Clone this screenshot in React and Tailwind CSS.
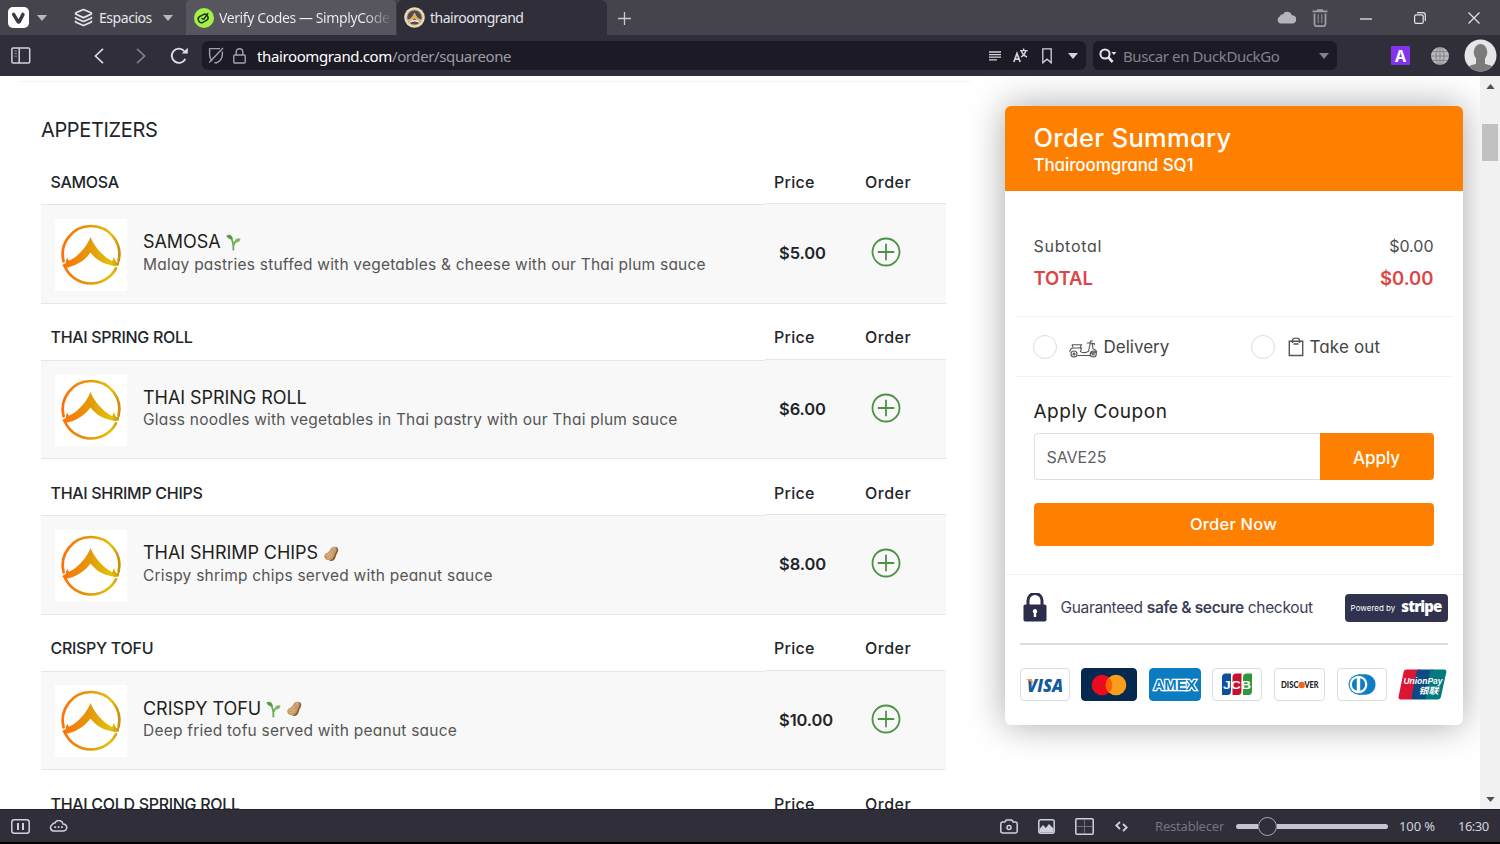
import React from "react";
import { Layers } from "lucide-react";

const menu = [
  {
    name: "SAMOSA",
    desc: "Malay pastries stuffed with vegetables & cheese with our Thai plum sauce",
    price: "$5.00",
    tags: ["veg"],
  },
  {
    name: "THAI SPRING ROLL",
    desc: "Glass noodles with vegetables in Thai pastry with our Thai plum sauce",
    price: "$6.00",
    tags: [],
  },
  {
    name: "THAI SHRIMP CHIPS",
    desc: "Crispy shrimp chips served with peanut sauce",
    price: "$8.00",
    tags: ["nut"],
  },
  {
    name: "CRISPY TOFU",
    desc: "Deep fried tofu served with peanut sauce",
    price: "$10.00",
    tags: ["veg", "nut"],
  },
];

const Caret = ({ className = "" }) => (
  <svg width="10" height="6" viewBox="0 0 10 6" className={className}>
    <path d="M0 0h10L5 6z" fill="currentColor" />
  </svg>
);

const RoofLogo = () => (
  <svg width="72" height="72" viewBox="0 0 72 72" className="mt-[2px] bg-white">
    <defs>
      <linearGradient id="roof" x1="6" y1="0" x2="65" y2="0" gradientUnits="userSpaceOnUse">
        <stop offset="0" stopColor="#ff6f0a" />
        <stop offset="0.5" stopColor="#e39a08" />
        <stop offset="0.85" stopColor="#e3c20a" />
        <stop offset="1" stopColor="#c98a10" />
      </linearGradient>
    </defs>
    <g stroke="url(#roof)" fill="none" strokeWidth="2.7" strokeLinecap="round">
      <path d="M8.6 42.3A28.3 28.3 0 1 1 63.6 41.6" />
      <path d="M10.2 48.2A28.3 28.3 0 0 0 60.9 49.3" />
    </g>
    <path
      d="M35.5 18C31.5 28 23.500 37 14.500 41.600C12.900 41 12.600 40 12.600 38.400C10.700 40.400 11 42.600 10.800 44L7.200 46L9.500 49.200C20 47.500 29.500 42 35.500 33.600C41.500 41.500 50 45.800 60 46.900L63.800 46.500L64.300 42L61.500 43.300C60.400 42 59.600 40.300 59 38C58 39.800 58.200 41 57 41.900C48 37.500 39.500 28 35.500 18Z"
      fill="url(#roof)"
    />
  </svg>
);

const Sprout = () => (
  <svg width="15" height="17" viewBox="0 0 15 17" className="relative top-px">
    <path d="M7.3 16.4C7.7 12 7.4 8.5 5.4 4.6M7.8 10.6C8.4 8.8 9.4 7.6 10.8 6.8" stroke="#6aab55" strokeWidth="1.8" fill="none" />
    <path d="M.4 1.8C3-.2 6.600 1 6.800 5.400C3.600 5.600 1.600 4.600.4 1.800Z" fill="#5b9b4c" />
    <path d="M14.6 4.8C11.8 3.4 8.8 5 8.6 8.2C11.6 9 13.8 8 14.6 4.8Z" fill="#7cba60" />
  </svg>
);

const Peanut = () => (
  <svg width="16" height="16" viewBox="0 0 16 16" className="relative top-px">
    <path d="M12 .8C14.800 1 15.800 3.200 15 5.400C14.200 7.200 13.200 8.400 12.800 10.400C12.300 13.400 10 15.600 7.500 15C5.600 14.200 6.400 12 7.200 10Z" fill="#8d5b31" />
    <path d="M7.800 2.600C9 .5 12 .2 13.200 1.900C14.400 3.900 13 5.600 12 7.400C11 9.400 11.200 11 9.200 13C7 15 3 14.600 1.600 12C.4 9.400 2 7.600 4.200 6.700C6.400 5.700 6.800 4.400 7.800 2.600Z" fill="#c99c6b" />
    <path d="M3.200 9.600C5.600 8.600 7.200 7.400 8.400 5.200M4.400 12C6.600 11.600 7.800 10 8.800 8M10 3.200L11.400 2.400" stroke="#e6c597" strokeWidth=".9" fill="none" />
  </svg>
);

const AddButton = () => (
  <button className="mb-[2px] text-[#4c9245]" aria-label="Add">
    <svg width="30" height="30" viewBox="0 0 30 30" fill="none" stroke="currentColor">
      <circle cx="15" cy="15" r="13.5" strokeWidth="1.8" />
      <path d="M15 6.8v16.4M6.8 15h16.4" strokeWidth="1.8" />
    </svg>
  </button>
);

const TabBar = () => (
  <div className="flex h-[35px] shrink-0 bg-[#45444c] text-[14px] text-[#e4e4ea]">
    <div className="flex w-[186px] items-center pl-2">
      <svg width="21" height="21" viewBox="0 0 21 21">
        <rect width="21" height="21" rx="5" fill="#fff" />
        <path d="M5.6 7.4L10 14.6C10.4 15.3 10.9 15.3 11.3 14.6L15 7.4" stroke="#3b3a42" strokeWidth="3.4" strokeLinecap="round" fill="none" />
      </svg>
      <Caret className="ml-2 text-[#b9b8c0]" />
      <Layers size={19} strokeWidth={2.2} className="ml-[27px]" />
      <span className="ml-[6px] w-[54px] tracking-[-0.45px]">Espacios</span>
      <Caret className="ml-[10px] text-[#b9b8c0]" />
    </div>
    <div className="flex w-[211px] items-center overflow-hidden rounded-t-sm border-r border-[#3a3942] bg-[#57565e] pl-2">
      <svg width="20" height="20" viewBox="0 0 20 20" className="shrink-0">
        <circle cx="10" cy="10" r="10" fill="#a4f046" />
        <g transform="rotate(-28 10 10)" fill="none" stroke="#23351c" strokeWidth="1.5">
          <rect x="4" y="6.7" width="10" height="6.6" rx="3" />
          <path d="M7.500 9.200L9.300 11L16 7.600" />
        </g>
      </svg>
      <span className="ml-[5px] w-[171px] overflow-hidden whitespace-nowrap bg-linear-to-r from-[#f0f0f4] from-85% to-[#64636b] bg-clip-text tracking-[-0.4px] text-transparent">
        Verify Codes — SimplyCode
      </span>
    </div>
    <div className="flex w-[210px] items-center rounded-t-md bg-[#302f39] pl-[7px]">
      <svg width="21" height="21" viewBox="0 0 21 21">
        <circle cx="10.5" cy="10.5" r="10.3" fill="#e9dcc4" />
        <circle cx="10.5" cy="10.5" r="7.6" fill="#4a4f58" stroke="#dfa04a" strokeWidth="1" />
        <path d="M3.5 13.4C7 12.3 9.4 9.4 10.5 6.2C11.6 9.4 14 12.3 17.5 13.4C14.4 13.9 12 12.8 10.5 10.8C9 12.8 6.6 13.9 3.5 13.4Z" fill="#f5a623" stroke="#f8ecd4" strokeWidth=".6" />
        <path d="M5 15.5C8 13 13 13 16 15.5" stroke="#efe3cf" strokeWidth="1.6" fill="none" />
      </svg>
      <span className="ml-[5px] tracking-[-0.5px]">thairoomgrand</span>
    </div>
    <div className="flex flex-1 items-center pl-[11px]">
      <svg width="13" height="13" viewBox="0 0 13 13" stroke="#c9c8d0" strokeWidth="1.3" className="mt-0.5">
        <path d="M6.5 0v13M0 6.5h13" />
      </svg>
      <div className="ml-auto flex items-center">
        <svg width="19" height="13" viewBox="0 0 19 13" fill="#b5b4bc" className="mr-px">
          <path d="M4 12.6A3.8 3.8 0 0 1 2.8 5.4A3.2 3.2 0 0 1 6 3.2A5 5 0 0 1 15 4.2A4.2 4.2 0 0 1 15.2 12.6Z" />
        </svg>
        <svg width="16" height="18" viewBox="0 0 16 18" fill="none" stroke="#a09fa7" strokeWidth="1.7" className="ml-[15px]">
          <path d="M.5 2.4h15M5 1.2h6M2.5 4.5v10.2c0 1.6.8 2.4 2.2 2.4h6.6c1.4 0 2.2-.8 2.2-2.4V4.5" />
          <path d="M6.3 5v9M9.7 5v9" strokeWidth="1.4" stroke="#7c7b83" />
        </svg>
        <svg width="12" height="12" viewBox="0 0 12 12" stroke="#e4e4ea" strokeWidth="1.3" className="ml-8">
          <path d="M0 7h12" />
        </svg>
        <svg width="12" height="12" viewBox="0 0 12 12" fill="none" stroke="#e4e4ea" strokeWidth="1.2" className="ml-[42px]">
          <rect x=".6" y="2.8" width="8.6" height="8.6" rx="1.5" />
          <path d="M3 .7h6c1.4 0 2.3.9 2.3 2.3v6" />
        </svg>
        <svg width="12" height="12" viewBox="0 0 12 12" stroke="#e4e4ea" strokeWidth="1.2" className="ml-[42px] mr-5">
          <path d="M.5.5l11 11M11.5.5l-11 11" />
        </svg>
      </div>
    </div>
  </div>
);

const AddressBar = () => (
  <div className="flex h-[41px] shrink-0 items-center bg-[#302f39] text-[15px] text-[#dddde6]">
    <svg width="20" height="17" viewBox="0 0 20 17" fill="none" stroke="#cfd1e0" strokeWidth="1.5" className="ml-[11px]">
      <rect x=".9" y=".9" width="17.8" height="15" rx="1.2" />
      <path d="M8.2 1v15" />
      <path d="M3.5 4h2.4M3.5 6.6h2.4M3.5 9.2h2.4" strokeWidth="1" stroke="#8f90a0" />
    </svg>
    <svg width="10" height="16" viewBox="0 0 10 16" fill="none" stroke="#dddde6" strokeWidth="1.6" className="ml-[63px]">
      <path d="M9 .8L1.4 8L9 15.2" />
    </svg>
    <svg width="10" height="16" viewBox="0 0 10 16" fill="none" stroke="#85848e" strokeWidth="1.6" className="ml-8">
      <path d="M1 .8L8.6 8L1 15.2" />
    </svg>
    <svg width="18" height="17" viewBox="0 0 18 17" fill="none" stroke="#dddde6" strokeWidth="1.9" className="ml-[24px]">
      <path d="M15.3 11.8A7.1 7.1 0 1 1 14.2 4" />
      <path d="M17.8.8V6.6H11.8Z" fill="#dddde6" stroke="none" />
    </svg>
    <div className="ml-[14px] flex h-[29px] w-[884px] items-center rounded-md bg-[#1c1b25] pl-[6px]">
      <svg width="16" height="17" viewBox="0 0 16 17" fill="none" stroke="#a2a2ae" strokeWidth="1.4">
        <path d="M12 1.6H1.6V7.5C1.6 10.3 2.4 12.4 4 14M6.5 15.2C7 15.6 7.6 15.8 8.1 16C12.6 14.2 14.4 11.2 14.4 7V4.6" />
        <path d="M15 1L1.2 15.4" />
      </svg>
      <svg width="13" height="16" viewBox="0 0 13 16" fill="none" stroke="#a2a2ae" strokeWidth="1.4" className="ml-[9px]">
        <rect x=".8" y="7" width="11.4" height="8" rx="1" />
        <path d="M3.2 7V4A3.3 3.3 0 0 1 9.8 4V7" />
      </svg>
      <span className="ml-[11px] mt-px tracking-[-0.38px] text-[#9d9ca8]">
        <span className="text-white">thairoomgrand.com</span>/order/squareone
      </span>
      <div className="ml-auto flex items-center text-[#d3d3dc]">
        <svg width="12" height="10" viewBox="0 0 12 10" stroke="currentColor" strokeWidth="1.3">
          <path d="M0 1h12M0 3.6h12M0 6.2h12M0 8.8h8" />
        </svg>
        <svg width="15" height="15" viewBox="0 0 15 15" fill="none" stroke="currentColor" strokeWidth="1.4" className="ml-3">
          <path d="M.8 14L4 5.4L7.2 14M1.9 11.2h4.2" strokeWidth="1.7" />
          <path d="M7 2.6h7.6M10.6.4v2.2M8 9C10.6 7.6 12.2 5.6 12.8 2.8M8.4 3C9.2 5.6 11 7.8 14 9" />
        </svg>
        <svg width="10" height="16" viewBox="0 0 10 16" fill="none" stroke="currentColor" strokeWidth="1.3" className="ml-[14px]">
          <path d="M.8.8h8.4v14L5 11.2L.8 14.8Z" />
        </svg>
        <Caret className="ml-4 mr-[8px]" />
      </div>
    </div>
    <div className="ml-[7px] flex h-[29px] w-[244px] items-center rounded-md bg-[#1c1b25] pl-[6px] text-[#82818d]">
      <svg width="18" height="15" viewBox="0 0 18 15" fill="none" stroke="#e2e2ea" strokeWidth="2">
        <circle cx="6" cy="6" r="4.6" />
        <path d="M9.4 9.4L13.6 14" strokeWidth="2.6" />
        <path d="M12.4 4h5L14.9 7Z" fill="#e2e2ea" stroke="none" />
      </svg>
      <span className="ml-[6px] mt-px tracking-[-0.4px]">Buscar en DuckDuckGo</span>
      <Caret className="ml-auto mr-2" />
    </div>
    <div className="ml-[54px] flex h-[19px] w-[19px] items-center justify-center rounded-[1px] bg-[#8332ee] text-[16px] font-bold text-white">
      A
    </div>
    <svg width="18" height="18" viewBox="0 0 18 18" className="ml-[21px]">
      <circle cx="9" cy="9" r="9" fill="#b9b9bd" />
      <g fill="none" stroke="#77777c" strokeWidth=".8">
        <ellipse cx="9" cy="9" rx="4" ry="8.8" />
        <path d="M9 0v18M0 9h18M1.6 4.6h14.8M1.6 13.4h14.8" />
      </g>
    </svg>
    <svg width="33" height="33" viewBox="0 0 33 33" className="ml-[15px]">
      <clipPath id="avatar">
        <circle cx="16.5" cy="16.5" r="16" />
      </clipPath>
      <circle cx="16.5" cy="16.5" r="16" fill="#e6e6e6" />
      <g clipPath="url(#avatar)" fill="#7b7b7b">
        <ellipse cx="16.5" cy="13.2" rx="6.8" ry="8.2" />
        <path d="M12 18h9v7c3 .8 7 1.200 9 4l-3 5H6l-3-5c2-2.800 6-3.200 9-4Z" />
      </g>
    </svg>
  </div>
);

const SectionHeader = ({ name }) => (
  <div className="flex h-14 shrink-0 items-center pt-[11px] text-[16px] font-[450] text-[#212529]">
    <div className="w-[724px] pl-[9.5px] tracking-[-0.3px]">{name}</div>
    <div className="w-[90px] pl-[9px] tracking-[0.3px]">Price</div>
    <div className="pl-[10px] tracking-[0.5px]">Order</div>
  </div>
);

const MenuSection = ({ item }) => (
  <section className="h-[155.5px] shrink-0">
    <SectionHeader name={item.name} />
    <div className="flex h-[99.5px]">
      <div className="flex w-[724px] items-center border-y border-[#e6e6e6] bg-[#f8f8f8] pl-[14px]">
        <RoofLogo />
        <div className="ml-4 pb-[1px]">
          <div className="flex h-6 items-center gap-[5px]">
            <h3 className="text-[18px] font-[420] tracking-[-0.05px] text-[#1d1f21]">{item.name}</h3>
            {item.tags.map((tag) => (tag === "veg" ? <Sprout key={tag} /> : <Peanut key={tag} />))}
          </div>
          <p className="h-[23px] whitespace-nowrap text-[15.5px] leading-[22px] tracking-[0.22px] text-[#555]">{item.desc}</p>
        </div>
      </div>
      <div className="-mt-px flex w-[181px] items-center border-y border-[#e6e6e6] bg-[#f8f8f8] pl-[14px]">
        <span className="w-[92px] pt-px text-[16.5px] font-semibold tracking-[-0.1px] text-[#212529]">{item.price}</span>
        <AddButton />
      </div>
    </div>
  </section>
);

const Scooter = () => (
  <svg width="28" height="18" viewBox="0 0 28 18" fill="none" stroke="#555" strokeWidth="1.1">
    <circle cx="5" cy="14" r="3" />
    <circle cx="24.3" cy="14" r="3" />
    <circle cx="5" cy="14" r="1" />
    <circle cx="24.3" cy="14" r="1" />
    <path d="M.8 12.300C.8 9.500 2.500 8 5 8h7.500l-1 3.600c1.200 1 3.300 1.200 5.500.8l2.600-1.200L21.300 3h1.500l1.400 6c2 .3 3.300 1.500 3.500 3.500l-4.700-.5-2.300 3.500H8.500" />
    <path d="M3 4.700h9.500L11 8M3 4.700L4 7.500M17.800 3h3l1.200-2.200h1.600M22.800 3.600h2.400v1.600" />
  </svg>
);

const Bag = () => (
  <svg width="16" height="20" viewBox="0 0 16 20" fill="none" stroke="#555" strokeWidth="1.4">
    <path d="M1.3 4.2h13.400v14.300H1.3ZM4.500 6V3.200C4.500.4 11.500.4 11.500 3.200V6M5.500 7h5" />
  </svg>
);

const CardBox = ({ className = "border-[#dcdce2] bg-white w-[50px]", children }) => (
  <div className={`flex h-[33px] items-center justify-center rounded-[4px] border ${className}`}>
    {children}
  </div>
);

const Cards = () => (
  <div className="mt-[23px] flex items-center justify-between">
    <CardBox>
      <svg width="40" height="18" viewBox="0 0 40 18">
        <text x="2" y="15.5" textLength="36" lengthAdjust="spacingAndGlyphs" fontFamily="Open Sans, sans-serif" fontSize="17" fontWeight="800" fontStyle="italic" fill="#165a9e">VISA</text>
        <path d="M.3 3H5.600C6.800 3 7.100 3.600 7.400 4.600L8.200 8C6.500 5.600 3.800 3.800.3 3Z" fill="#f3a01e" />
      </svg>
    </CardBox>
    <CardBox className="w-[56px] border-[#06294f] bg-[#06294f]">
      <svg width="36" height="22" viewBox="0 0 36 22">
        <circle cx="11" cy="11" r="10.3" fill="#eb0a1e" />
        <circle cx="25" cy="11" r="10.3" fill="#f79e1b" />
        <path d="M18 3.400A10.300 10.300 0 0 1 18 18.600A10.300 10.300 0 0 1 18 3.400Z" fill="#ff5f00" />
      </svg>
    </CardBox>
    <CardBox className="w-[52px] border-[#0b7bc2] bg-[#0b7bc2]">
      <svg width="48" height="18" viewBox="0 0 48 18">
        <text x="2.5" y="14" textLength="43" lengthAdjust="spacingAndGlyphs" fontFamily="Liberation Sans, sans-serif" fontSize="14" fontWeight="700" fill="#0b7bc2" stroke="#fff" strokeWidth="2.4" paintOrder="stroke">AMEX</text>
      </svg>
    </CardBox>
    <CardBox>
      <svg width="30" height="23" viewBox="0 0 30 23">
        <path d="M0 22V4C0 1.600 1.600.4 3.600.4H9V18C9 21 7.500 22 5.500 22Z" fill="#0f4fa0" />
        <path d="M10.500 22V4C10.500 1.600 12 .4 14 .4H19.500V18C19.500 21 18 22 16 22Z" fill="#c8102e" />
        <path d="M21 22V4C21 1.600 22.500.4 24.500.4H30V18C30 21 28.500 22 26.500 22Z" fill="#2c9a3c" />
        <text x="1" y="15.5" textLength="28" lengthAdjust="spacingAndGlyphs" fontFamily="Liberation Sans, sans-serif" fontSize="11" fontWeight="700" fill="#fff">JCB</text>
      </svg>
    </CardBox>
    <CardBox className="w-[51px] border-[#dcdce2] bg-white">
      <svg width="38" height="10" viewBox="0 0 38 10" fontFamily="Lato, sans-serif" fontSize="8.5" fontWeight="900" fill="#222">
        <text x="0" y="8" textLength="17.5" lengthAdjust="spacingAndGlyphs">DISC</text>
        <circle cx="20.7" cy="5" r="3.2" fill="#f2641f" />
        <text x="23.5" y="8" textLength="14" lengthAdjust="spacingAndGlyphs">VER</text>
      </svg>
    </CardBox>
    <CardBox>
      <svg width="28" height="21" viewBox="0 0 28 21">
        <path d="M10 .3H17C23 .3 27.500 4.600 27.500 10.500S23 20.700 17 20.700H10Z" fill="#0f7cc4" />
        <circle cx="10.5" cy="10.5" r="10" fill="#1b84c8" />
        <circle cx="10.5" cy="10.5" r="8.8" fill="#fff" />
        <path d="M8.800 4.300V16.700A6.400 6.400 0 0 1 8.800 4.300ZM12.200 4.300V16.700A6.400 6.400 0 0 0 12.200 4.300Z" fill="#0f7cc4" />
      </svg>
    </CardBox>
    <svg width="49" height="31" viewBox="0 0 49 31">
      <path d="M8.500.5H22L15 30.500H3C1 30.500.2 29.300.6 27.500L5.600 3C6 1.300 7 .5 8.500.5Z" fill="#dc1535" />
      <path d="M21 .5H35L28 30.500H16C14 30.500 13.300 29.300 13.700 27.500L18.500 3C19 1.300 19.700.5 21 .5Z" fill="#0b4a82" />
      <path d="M34 .5H46C48 .5 48.700 1.600 48.300 3.300L43 27.500C42.600 29.500 41.500 30.500 39.700 30.500H27.500L32 3C32.300 1.300 32.700.5 34 .5Z" fill="#037a80" />
      <text x="5.5" y="15" textLength="39" lengthAdjust="spacingAndGlyphs" fontFamily="Liberation Sans, sans-serif" fontSize="9.5" fontWeight="700" fontStyle="italic" fill="#fff">UnionPay</text>
      <text x="20.5" y="25" textLength="20" lengthAdjust="spacingAndGlyphs" fontFamily="Noto Sans CJK SC, sans-serif" fontSize="9" fontWeight="700" fontStyle="italic" fill="#fff">银联</text>
    </svg>
  </div>
);

const OrderSummary = () => (
  <aside className="ml-[34.5px] mt-[30px] flex h-[619px] w-[458px] shrink-0 flex-col overflow-hidden rounded-md bg-white shadow-[0_0_36px_rgba(0,0,0,0.35)]">
    <div className="h-[85px] bg-[#ff7f00] pl-[29px] pt-[15.5px] text-white">
      <h2 className="text-[25.5px] font-medium leading-8 tracking-[0.3px]">Order Summary</h2>
      <div className="text-[17px] font-medium leading-[22px] tracking-[-0.1px]">Thairoomgrand SQ1</div>
    </div>
    <div className="mx-[29px] mt-[42px] flex items-center justify-between text-[16px] leading-[26px] text-[#4c4c4c]">
      <span className="font-[430] tracking-[0.7px]">Subtotal</span>
      <span>$0.00</span>
    </div>
    <div className="mx-[29px] mt-[5px] flex items-center justify-between text-[18.5px] font-semibold leading-7 text-[#dc4545]">
      <span className="tracking-[-0.1px]">TOTAL</span>
      <span>$0.00</span>
    </div>
    <div className="mx-[11px] mt-[24px] flex h-[61px] items-center border-y border-[#f1f1f1] pl-[17px] text-[17px] font-[430] text-[#444]">
      <span className="h-[24px] w-[24px] rounded-full border border-[#dcdcdc]" />
      <span className="ml-[12px] pt-1"><Scooter /></span>
      <span className="ml-[7px] w-[147px] pt-[3px]">Delivery</span>
      <span className="h-[24px] w-[24px] rounded-full border border-[#dcdcdc]" />
      <span className="ml-[13px]"><Bag /></span>
      <span className="ml-[6px] pt-[3px] tracking-[0.15px]">Take out</span>
    </div>
    <h4 className="ml-[29px] mt-[20px] text-[19px] font-[420] leading-[30px] tracking-[0.5px] text-[#222]">Apply Coupon</h4>
    <div className="mx-[29px] mt-[6px] flex h-[47px] shrink-0">
      <div className="flex flex-1 items-center rounded-l-[4px] border border-r-0 border-[#e0e0e0] pl-3 text-[16px] tracking-[-0.1px] text-[#5c6066]">SAVE25</div>
      <button className="w-[114px] rounded-r-[4px] bg-[#ff7f00] pt-1 text-[17px] font-medium text-white">Apply</button>
    </div>
    <button className="mx-[29px] mt-[23px] h-[43px] shrink-0 rounded-[4px] bg-[#ff7f00] text-[16.5px] font-medium tracking-[0.2px] text-white">Order Now</button>
    <div className="mt-[28px] border-t border-[#f0f0f0] px-[15px]">
      <div className="flex h-[70px] items-center border-b-2 border-[#dadae0] pb-[3px]">
        <svg width="24" height="29" viewBox="0 0 24 29" className="ml-[3px]">
          <path d="M5 12V7.500a7 7 0 0 1 14 0V12" fill="none" stroke="#2b2d4b" strokeWidth="3" />
          <rect x=".5" y="11.5" width="23" height="17" rx="1.8" fill="#2b2d4b" />
          <path d="M12 16a2.300 2.300 0 0 1 1.200 4.200V24h-2.400v-3.800A2.300 2.300 0 0 1 12 16Z" fill="#fff" />
        </svg>
        <span className="ml-[14px] whitespace-nowrap text-[15.5px] tracking-[-0.34px] text-[#3c3e58] [font-feature-settings:normal]">
          Guaranteed <b className="font-semibold">safe & secure</b> checkout
        </span>
        <div className="ml-auto flex h-7 w-[103px] items-center justify-center rounded-[4px] bg-[#30324f] text-white">
          <span className="text-[8px]">Powered by</span>
          <span className="ml-[6px] pb-[3px] font-['Open_Sans'] text-[15px] font-extrabold leading-none tracking-[-0.9px]">stripe</span>
        </div>
      </div>
      <Cards />
    </div>
  </aside>
);

const Scrollbar = () => (
  <div className="flex w-5 shrink-0 flex-col items-center bg-[#f1f1f1] pb-[7px] pt-[8px] text-[#505050]">
    <Caret className="h-[5px] w-[9px] rotate-180" />
    <div className="mt-[35px] h-[37px] w-4 bg-[#c1c1c1]" />
    <Caret className="mt-auto h-[5px] w-[9px]" />
  </div>
);

const StatusBar = () => (
  <div className="flex h-[35px] shrink-0 items-center border-b-2 border-t border-b-black border-t-[#222129] bg-[#302f39] text-[13px] text-[#cfd1de]">
    <svg width="19" height="15" viewBox="0 0 19 15" fill="none" stroke="currentColor" strokeWidth="1.5" className="ml-[11px]">
      <rect x=".8" y=".8" width="17.4" height="13.4" rx="2.5" />
      <path d="M7 4v7M12 4v7" strokeWidth="2" />
    </svg>
    <svg width="19" height="12" viewBox="0 0 19 12" fill="none" stroke="currentColor" strokeWidth="1.5" className="ml-[19px]">
      <path d="M4.500 11A3.500 3.500 0 0 1 3.500 4.400C4 3.200 5 2.800 6 3A4.200 4.200 0 0 1 14 4A3.500 3.500 0 0 1 14.500 11Z" />
      <path d="M5.300 7.200h1.800M8.700 7.200h1.800M12.100 7.200h1.800" strokeWidth="1.8" />
    </svg>
    <div className="ml-auto flex items-center">
      <svg width="18" height="15" viewBox="0 0 18 15" fill="none" stroke="currentColor" strokeWidth="1.5">
        <path d="M2.800 3h2L6.300 1h5.400l1.500 2h2c1.300 0 2 .7 2 2v7c0 1.300-.7 2-2 2H2.800c-1.300 0-2-.7-2-2V5c0-1.300.7-2 2-2Z" />
        <circle cx="9" cy="8.5" r="2" />
      </svg>
      <svg width="17" height="15" viewBox="0 0 17 15" fill="none" stroke="currentColor" strokeWidth="1.5" className="ml-5">
        <rect x=".8" y=".8" width="15.4" height="13.4" rx="2" />
        <path d="M1.500 13.500V10L5 6L7.800 9L11 5L15.500 9.500V13.500Z" fill="currentColor" stroke="none" />
      </svg>
      <svg width="19" height="17" viewBox="0 0 19 17" fill="none" stroke="currentColor" strokeWidth="1.5" className="ml-5">
        <rect x=".8" y=".8" width="17.4" height="15.4" rx="1" />
        <path d="M9.500 1v15M1 8.500h17" strokeWidth=".8" stroke="#7c7d89" />
      </svg>
      <svg width="13" height="11" viewBox="0 0 13 11" fill="none" stroke="currentColor" strokeWidth="1.8" className="ml-[21px]">
        <path d="M5 1L1.300 4.500L5 8M8 3L11.700 6.500L8 10" />
      </svg>
      <span className="ml-[27px] w-[69px] pt-px tracking-[-0.2px] text-[#74737f]">Restablecer</span>
      <div className="ml-[12px] flex h-5 w-[152px] items-center">
        <div className="h-[5px] w-[22px] rounded-l-full bg-[#c3c5d2]" />
        <div className="h-[19px] w-[19px] rounded-full border border-[#a6a7b4] bg-[#302f39]" />
        <div className="h-[5px] flex-1 rounded-r-full bg-[#c3c5d2]" />
      </div>
      <span className="ml-[11px] w-[48px] pt-px tracking-[-0.1px]">100 %</span>
      <span className="ml-[11px] mr-[10px] w-8 pt-px tracking-[-0.5px]">16:30</span>
    </div>
  </div>
);

const App = () => (
  <div className="flex h-[844px] w-[1500px] flex-col overflow-hidden bg-white font-['Noto_Sans',sans-serif]">
    <TabBar />
    <AddressBar />
    <div className="flex min-h-0 flex-1">
      <main className="flex flex-1 items-start overflow-hidden bg-white font-[Inter,sans-serif] [font-feature-settings:'cv11']">
        <div className="flex w-[970px] shrink-0 flex-col">
          <div className="ml-5 mt-[5px] h-px bg-[#f3f3f3]" />
          <div className="ml-[41px] w-[905px]">
            <h1 className="h-[66px] pt-[34px] text-[20px] font-[430] leading-[28px] tracking-[-0.35px] text-[#212529]">APPETIZERS</h1>
            {menu.map((item) => (
              <MenuSection key={item.name} item={item} />
            ))}
            <SectionHeader name="THAI COLD SPRING ROLL" />
          </div>
        </div>
        <OrderSummary />
      </main>
      <Scrollbar />
    </div>
    <StatusBar />
  </div>
);

export default App;
